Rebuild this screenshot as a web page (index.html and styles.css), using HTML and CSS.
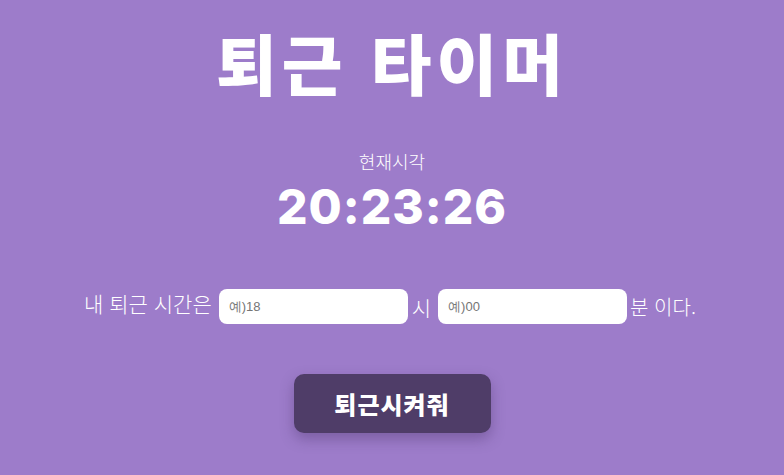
FILE: index.html
```html
<!DOCTYPE html>
<html lang="ko">
<head>
<meta charset="utf-8">
<title>퇴근 타이머</title>
<link rel="stylesheet" href="styles.css">
</head>
<body>
<main class="page">
  <h1 class="title">퇴근 타이머</h1>
  <section class="clock">
    <div class="clock-label">현재시각</div>
    <div class="clock-time">20:23:26</div>
  </section>
  <form class="form">
    <span class="form-text lead">내 퇴근 시간은</span>
    <input class="field" type="text" placeholder="예)18">
    <span class="form-text unit">시</span>
    <input class="field" type="text" placeholder="예)00">
    <span class="form-text unit tail">분 이다.</span>
  </form>
  <button class="go" type="button">퇴근시켜줘</button>
</main>
</body>
</html>
```
FILE: styles.css
```css
* { box-sizing: border-box; }
html, body {
  margin: 0;
  height: 100%;
}
body {
  background: #9d7cca;
  color: #fff;
  font-family: "Noto Sans CJK KR", "Noto Sans", sans-serif;
  overflow: hidden;
}
.page {
  display: flex;
  flex-direction: column;
  align-items: center;
  padding-top: 18px;
}
.title {
  margin: 0;
  font-size: 66px;
  font-weight: 900;
  line-height: 86px;
  letter-spacing: 5px;
}
.clock {
  display: flex;
  flex-direction: column;
  align-items: center;
  margin-top: 44px;
}
.clock-label {
  font-size: 18px;
  font-weight: 300;
  line-height: 26px;
}
.clock-time {
  font-family: "Inter", "Noto Sans", sans-serif;
  font-size: 48px;
  font-weight: 800;
  line-height: 50px;
  margin-top: 8px;
  letter-spacing: 1px;
}
.form {
  display: flex;
  align-items: center;
  margin-top: 57px;
  margin-left: -4px;
}
.form-text {
  font-size: 21px;
  font-weight: 300;
  line-height: 28px;
}
.lead { margin-right: 7px; margin-top: -8px; }
.unit { margin: 0 7px 0 4px; }
.tail { margin: 0 0 0 3px; font-size: 20px; }
.field {
  width: 189px;
  height: 35px;
  border: none;
  border-radius: 8px;
  background: #fff;
  padding: 0 10px;
  font-family: "Liberation Sans", sans-serif;
  font-size: 13px;
  outline: none;
}
.field::placeholder { color: #757575; }
.go {
  margin-top: 50px;
  width: 197px;
  height: 59px;
  border: none;
  border-radius: 10px;
  background: #4f3d68;
  color: #fff;
  font-family: "Noto Sans CJK KR", sans-serif;
  font-size: 24px;
  font-weight: 900;
  letter-spacing: 1px;
  box-shadow: 0 6px 14px rgba(60, 40, 90, 0.35);
}
```
